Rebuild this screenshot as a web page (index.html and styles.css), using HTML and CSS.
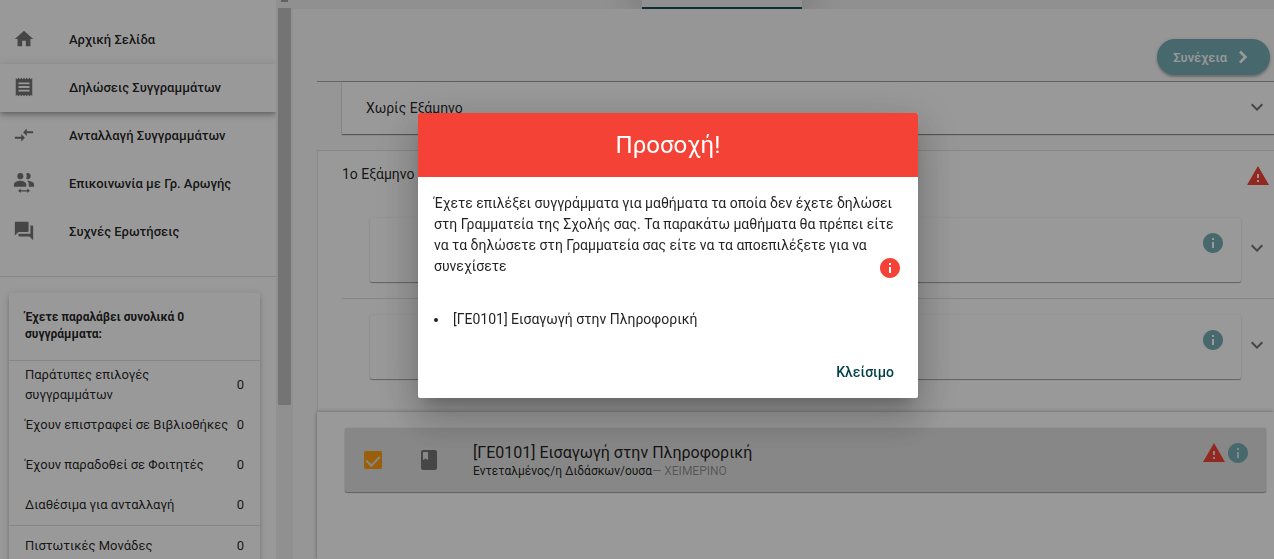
FILE: index.html
```
<!DOCTYPE html>
<html lang="el">
<head>
    <meta charset="UTF-8">
    <meta name="viewport" content="width=device-width, initial-scale=1.0">
    <title>Δηλώσεις Συγγραμμάτων</title>
    <link rel="stylesheet" href="styles.css">
</head>
<body>
    <!-- shared icons -->
    <svg class="sprite" aria-hidden="true">
        <symbol id="chevron" viewBox="0 0 24 24"><path d="M7.41 7.59 12 12.17l4.59-4.58L18 9l-6 6-6-6z"/></symbol>
        <symbol id="info" viewBox="0 0 24 24"><path d="M12 2C6.48 2 2 6.48 2 12s4.48 10 10 10 10-4.48 10-10S17.52 2 12 2zm1 15h-2v-6h2v6zm0-8h-2V7h2v2z"/></symbol>
        <symbol id="warning" viewBox="0 0 24 24"><path d="M1 21h22L12 2 1 21zm12-3h-2v-2h2v2zm0-4h-2v-4h2v4z"/></symbol>
    </svg>

    <div class="layout">
        <aside class="sidebar">
            <nav class="menu">
                <a href="#" class="menu-item">
                    <svg class="icon" viewBox="0 0 24 24"><path d="M10 20v-6h4v6h5v-8h3L12 3 2 12h3v8z"/></svg>
                    <span>Αρχική Σελίδα</span>
                </a>
                <a href="#" class="menu-item active">
                    <svg class="icon" viewBox="0 0 24 24"><path d="M18 17H6v-2h12v2zm0-4H6v-2h12v2zm0-4H6V7h12v2zM3 22l1.5-1.5L6 22l1.5-1.5L9 22l1.5-1.5L12 22l1.5-1.5L15 22l1.5-1.5L18 22l1.5-1.5L21 22V2l-1.5 1.5L18 2l-1.5 1.5L15 2l-1.5 1.5L12 2l-1.5 1.5L9 2 7.5 3.5 6 2 4.5 3.5 3 2v20z"/></svg>
                    <span>Δηλώσεις Συγγραμμάτων</span>
                </a>
                <a href="#" class="menu-item">
                    <svg class="icon" viewBox="0 0 24 24"><path d="M9.01 14H2v2h7.01v3L13 15l-3.99-4v3zm5.98-1v-3H22V8h-7.01V5L11 9l3.99 4z"/></svg>
                    <span>Ανταλλαγή Συγγραμμάτων</span>
                </a>
                <a href="#" class="menu-item">
                    <svg class="icon" viewBox="0 0 24 24"><circle cx="8" cy="4.5" r="3.3"/><path d="M16 1.2a3.3 3.3 0 1 1-1.7 6.1 5.5 5.5 0 0 0 0-5.6 3.3 3.3 0 0 1 1.7-.5zM8 9.5c-2.700 0-7 1.300-7 4V16h13.500v-2.500c0-2.700-3.800-4-6.500-4zM15.300 9.600c1.200.9 1.900 2.200 1.900 3.900V16H23v-2.500c0-2.500-4.200-3.900-7.700-3.900zM5.500 20.500 8.500 18v1.800h7V18l3 2.500-3 2.500v-1.800h-7V23z"/></svg>
                    <span>Επικοινωνία με Γρ. Αρωγής</span>
                </a>
                <a href="#" class="menu-item">
                    <svg class="icon" viewBox="0 0 24 24"><path d="M21 6h-2v9H6v2c0 .55.45 1 1 1h11l4 4V7c0-.55-.45-1-1-1zm-4 6V3c0-.55-.45-1-1-1H3c-.55 0-1 .45-1 1v14l4-4h10c.55 0 1-.45 1-1z"/></svg>
                    <span>Συχνές Ερωτήσεις</span>
                </a>
            </nav>
            <section class="summary">
                <h2>Έχετε παραλάβει συνολικά 0 συγγράμματα:</h2>
                <dl class="counts">
                    <div><dt>Παράτυπες επιλογές συγγραμμάτων</dt><dd>0</dd></div>
                    <div><dt>Έχουν επιστραφεί σε Βιβλιοθήκες</dt><dd>0</dd></div>
                    <div><dt>Έχουν παραδοθεί σε Φοιτητές</dt><dd>0</dd></div>
                    <div><dt>Διαθέσιμα για ανταλλαγή</dt><dd>0</dd></div>
                    <div class="credits"><dt>Πιστωτικές Μονάδες</dt><dd>0</dd></div>
                </dl>
            </section>
        </aside>
        <div class="scrollbar">
            <div class="scroll-arrow"></div>
            <div class="scroll-thumb"></div>
        </div>

        <main class="main">
            <div class="tabs"><div class="tab"></div></div>
            <div class="actions">
                <button class="next" type="button">
                    Συνέχεια
                    <svg class="icon" viewBox="0 0 24 24"><path d="M8 7.5 9.9 5.6 16.3 12l-6.4 6.4L8 16.5l4.5-4.5z"/></svg>
                </button>
            </div>
            <div class="content">
                <button class="no-semester" type="button">
                    Χωρίς Εξάμηνο
                    <svg class="icon"><use href="#chevron"/></svg>
                </button>
                <section class="semester">
                    <header class="semester-head">
                        <h3>1ο Εξάμηνο</h3>
                        <svg class="icon red"><use href="#warning"/></svg>
                    </header>
                    <div class="course">
                        <div class="course-card"><svg class="icon teal"><use href="#info"/></svg></div>
                        <button class="toggle" type="button" aria-label="Άνοιγμα"><svg class="icon"><use href="#chevron"/></svg></button>
                    </div>
                    <div class="course">
                        <div class="course-card"><svg class="icon teal"><use href="#info"/></svg></div>
                        <button class="toggle" type="button" aria-label="Άνοιγμα"><svg class="icon"><use href="#chevron"/></svg></button>
                    </div>
                </section>
                <section class="selected">
                    <div class="book">
                        <input type="checkbox" id="book1" checked>
                        <svg class="icon book-icon" viewBox="0 0 24 24"><path d="M18 2H6c-1.1 0-2 .9-2 2v16c0 1.1.9 2 2 2h12c1.1 0 2-.9 2-2V4c0-1.1-.9-2-2-2zM6 4h5v8l-2.5-1.5L6 12V4z"/></svg>
                        <label for="book1" class="book-text">
                            <span class="book-title">[ΓΕ0101] Εισαγωγή στην Πληροφορική</span>
                            <span class="book-sub">Εντεταλμένος/η Διδάσκων/ουσα<span class="term">— ΧΕΙΜΕΡΙΝΟ</span></span>
                        </label>
                        <div class="book-status">
                            <svg class="icon red"><use href="#warning"/></svg>
                            <svg class="icon teal"><use href="#info"/></svg>
                        </div>
                    </div>
                </section>
            </div>
        </main>
    </div>

    <div class="overlay">
        <div class="dialog" role="dialog" aria-modal="true" aria-labelledby="dialog-title">
            <h1 id="dialog-title">Προσοχή!</h1>
            <div class="dialog-body">
                <p>Έχετε επιλέξει συγγράμματα για μαθήματα τα οποία δεν έχετε δηλώσει στη Γραμματεία της Σχολής σας. Τα παρακάτω μαθήματα θα πρέπει είτε να τα δηλώσετε στη Γραμματεία σας είτε να τα αποεπιλέξετε για να συνεχίσετε</p>
                <svg class="icon dialog-info"><use href="#info"/></svg>
                <ul>
                    <li>[ΓΕ0101] Εισαγωγή στην Πληροφορική</li>
                </ul>
            </div>
            <div class="dialog-actions">
                <button class="close" type="button">Κλείσιμο</button>
            </div>
        </div>
    </div>
</body>
</html>
```
FILE: styles.css
```
* {
    box-sizing: border-box;
}
body {
    margin: 0;
    font-family: Roboto, sans-serif;
    font-size: 14px;
    color: rgba(0, 0, 0, 0.87);
    background: #fafafa;
    overflow: hidden;
}
h1, h2, h3, p, ul, dl, dd {
    margin: 0;
}
button {
    font: inherit;
    color: inherit;
    border: none;
    background: none;
    padding: 0;
    cursor: pointer;
}
.sprite {
    display: none;
}
.icon {
    width: 24px;
    height: 24px;
    flex-shrink: 0;
    fill: #757575;
}
.icon.red {
    fill: #f44336;
}
.icon.teal {
    fill: #77adb4;
}
.layout {
    display: flex;
    height: 100vh;
}

/* sidebar */
.sidebar {
    width: 276px;
    flex-shrink: 0;
    background: #fff;
    overflow: hidden;
}
.menu {
    padding: 16px 0 20px;
    border-bottom: 1px solid #e0e0e0;
}
.menu-item {
    display: flex;
    align-items: center;
    gap: 33px;
    height: 48px;
    padding: 0 12px 2px;
    font-size: 13px;
    font-weight: 500;
    color: inherit;
    text-decoration: none;
}
.menu-item .icon {
    height: 22px;
}
.menu-item.active {
    background: #fff;
    box-shadow: 0 2px 4px -1px rgba(0, 0, 0, 0.2), 0 4px 5px rgba(0, 0, 0, 0.14), 0 1px 10px rgba(0, 0, 0, 0.12);
}
.summary {
    margin: 16px 16px 0 9px;
    background: #fff;
    border-radius: 2px;
    box-shadow: 0 3px 3px -2px rgba(0, 0, 0, 0.2), 0 3px 4px rgba(0, 0, 0, 0.14), 0 1px 8px rgba(0, 0, 0, 0.12);
}
.summary h2 {
    padding: 16px 16px 17px;
    font-size: 12px;
    line-height: 17px;
    font-weight: 700;
    border-bottom: 1px solid #e0e0e0;
}
.counts {
    padding-top: 4px;
    font-size: 13px;
    line-height: 20px;
}
.counts div {
    display: flex;
    justify-content: space-between;
    align-items: center;
    height: 40px;
    padding: 0 16px;
}
.counts .credits {
    height: 41px;
    border-top: 1px solid #e0e0e0;
}
.scrollbar {
    width: 17px;
    flex-shrink: 0;
    padding: 0 2px;
    background: #f1f1f1;
}
.scroll-arrow {
    height: 2px;
    width: 7px;
    margin: 0 auto 6px;
    background: #a3a3a3;
}
.scroll-thumb {
    height: 397px;
    background: #c1c1c1;
}

/* main area */
.main {
    flex: 1;
    min-width: 0;
    display: flex;
    flex-direction: column;
}
.tabs {
    height: 9px;
    flex-shrink: 0;
    display: flex;
    justify-content: center;
    background: #f1f1f1;
    overflow: hidden;
    padding-right: 124px;
}
.tab {
    width: 160px;
    background: #f1f1f1;
    border-bottom: 2px solid #174e58;
    box-shadow: 0 -10px 40px 4px rgba(0, 0, 0, 0.5);
}
.actions {
    display: flex;
    justify-content: flex-end;
    padding: 30px 4px 6px;
}
.next {
    display: flex;
    align-items: center;
    gap: 4px;
    height: 36px;
    padding: 0 15px 0 16px;
    border-radius: 18px;
    background: #77adb4;
    color: #fff;
    font-size: 13px;
    font-weight: 500;
    box-shadow: 0 2px 2px rgba(0, 0, 0, 0.2), 0 1px 4px rgba(0, 0, 0, 0.14);
}
.next .icon {
    fill: #fff;
}
.content {
    flex: 1;
    display: flex;
    flex-direction: column;
    margin-left: 24px;
    border-top: 1px solid #a8a8a8;
}
.no-semester {
    display: flex;
    justify-content: space-between;
    align-items: center;
    height: 52px;
    margin-left: 25px;
    padding: 0 5px 0 24px;
    background: #fff;
    box-shadow: 0 1px 1px rgba(0, 0, 0, 0.4), 0 0 2px rgba(0, 0, 0, 0.14);
}
.semester {
    margin-top: 16px;
    padding-bottom: 17px;
    padding-left: 24px;
    background: #fff;
    border-left: 1px solid #e8e8e8;
    border-top: 1px solid #e0e0e0;
}
.semester-head {
    display: flex;
    justify-content: space-between;
    align-items: center;
    height: 50px;
    padding-right: 4px;
}
.semester-head h3 {
    font-size: 14px;
    font-weight: 400;
    padding-bottom: 4px;
}
.course {
    display: flex;
    align-items: center;
    gap: 4px;
    padding: 17px 5px 16px 28px;
}
.course + .course {
    border-top: 1px solid #e0e0e0;
    padding-top: 16px;
}
.course-card {
    flex: 1;
    display: flex;
    justify-content: flex-end;
    height: 64px;
    padding: 13px 16px;
    background: #fff;
    border-radius: 2px;
    box-shadow: 0 1px 1px rgba(0, 0, 0, 0.35), 0 0 2px rgba(0, 0, 0, 0.1);
}
.toggle {
    display: flex;
    padding-bottom: 2px;
}
.selected {
    flex: 1;
    padding: 16px 8px 16px 28px;
    background: #fff;
    box-shadow: 0 0 4px rgba(0, 0, 0, 0.35);
}
.book {
    display: flex;
    align-items: center;
    height: 64px;
    padding: 0 16px 0 19px;
    background: #e2e2e2;
    border-radius: 2px;
    box-shadow: 0 1px 1px rgba(0, 0, 0, 0.35), 0 0 2px rgba(0, 0, 0, 0.14);
}
.book input {
    appearance: none;
    display: flex;
    justify-content: center;
    width: 18px;
    height: 18px;
    margin: 0;
    border: 2px solid #757575;
    border-radius: 2px;
}
.book input:checked {
    border-color: #ff9f12;
    background: #ff9f12;
}
.book input:checked::after {
    content: "";
    width: 6px;
    height: 11px;
    border: solid #e2e2e2;
    border-width: 0 2px 2px 0;
    transform: rotate(45deg);
}
.book-icon {
    margin: 0 32px 0 35px;
}
.book-text {
    flex: 1;
    display: flex;
    flex-direction: column;
    padding-top: 2px;
}
.book-title {
    font-size: 16px;
    line-height: 20px;
}
.book-sub {
    font-size: 12px;
    line-height: 16px;
}
.term {
    color: rgba(0, 0, 0, 0.38);
}
.book-status {
    display: flex;
    align-self: flex-start;
    padding-top: 13px;
}

/* dialog */
.overlay {
    position: fixed;
    inset: 0;
    display: flex;
    align-items: center;
    justify-content: center;
    padding: 0 0 48px 62px;
    background: rgba(0, 0, 0, 0.4);
}
.dialog {
    width: 500px;
    background: #fff;
    border-radius: 2px;
    overflow: hidden;
    box-shadow: 0 11px 15px -7px rgba(0, 0, 0, 0.2), 0 24px 38px 3px rgba(0, 0, 0, 0.14), 0 9px 46px 8px rgba(0, 0, 0, 0.12);
}
.dialog h1 {
    background: #f44336;
    color: #fff;
    font-size: 24px;
    font-weight: 400;
    line-height: 64px;
    text-align: center;
}
.dialog-body {
    position: relative;
    padding: 16px 16px 0;
    line-height: 21px;
}
.dialog-info {
    position: absolute;
    top: 79px;
    right: 16px;
    fill: #f44336;
}
.dialog-body ul {
    margin-top: 32px;
    padding-left: 0;
    list-style-position: inside;
}
.dialog-actions {
    display: flex;
    justify-content: flex-end;
    padding: 24px 16px 8px;
}
.close {
    height: 36px;
    padding: 0 8px;
    font-weight: 500;
    color: #003f4a;
}
```
